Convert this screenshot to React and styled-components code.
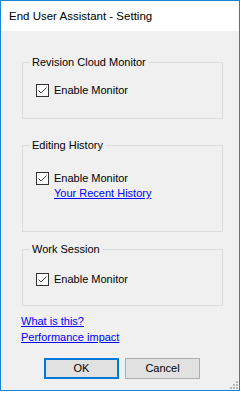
import React from "react";
import styled, { createGlobalStyle } from "styled-components";

const Global = createGlobalStyle`
  html, body { margin: 0; padding: 0; background: #ffffff; }
  * { box-sizing: border-box; }
`;

const Window = styled.div`
  width: 240px;
  height: 391px;
  border: 1px solid #1883d7;
  display: flex;
  flex-direction: column;
  font-family: "Liberation Sans", Arial, sans-serif;
  font-size: 11px;
  color: #000;
`;

const TitleBar = styled.div`
  height: 30px;
  flex: none;
  background: #ffffff;
  display: flex;
  align-items: center;
  padding-left: 8px;
  font-family: "Liberation Sans", Arial, sans-serif;
  font-size: 11.5px;
  color: #000;
`;

const Client = styled.div`
  flex: 1;
  background: #f0f0f0;
  display: flex;
  flex-direction: column;
  padding: 31px 0 0 0;
  position: relative;
`;

const GroupBox = styled.div`
  position: relative;
  margin-left: 21px;
  margin-top: ${(p) => p.$mt || 0}px;
  width: 201px;
  height: ${(p) => p.$h}px;
  border: 1px solid #dcdcdc;
  padding: ${(p) => p.$pt}px 0 0 13px;
  display: flex;
  flex-direction: column;
`;

const Legend = styled.span`
  position: absolute;
  top: -7px;
  left: 7px;
  padding: 0 2px;
  background: #f0f0f0;
  line-height: 13px;
  white-space: nowrap;
`;

const CheckRow = styled.label`
  display: flex;
  align-items: center;
  gap: 5px;
  height: 13px;
  line-height: 13px;
  white-space: nowrap;
`;

const Box = styled.span`
  width: 13px;
  height: 13px;
  flex: none;
  border: 1px solid #333333;
  background: #ffffff;
  display: flex;
  align-items: center;
  justify-content: center;
`;

const Link = styled.a`
  color: #0000ff;
  text-decoration: underline;
  line-height: 13px;
  height: 13px;
  white-space: nowrap;
  align-self: flex-start;
  margin-left: ${(p) => p.$ml || 0}px;
  margin-top: ${(p) => p.$mt || 0}px;
  cursor: pointer;
`;

const ButtonRow = styled.div`
  display: flex;
  gap: 6px;
  padding-left: 43px;
  margin-top: 14px;
`;

const Button = styled.button`
  width: 75px;
  height: 21px;
  padding: 0;
  font-family: "Liberation Sans", Arial, sans-serif;
  font-size: 11px;
  color: #000;
  background: #e1e1e1;
  border: ${(p) => (p.$default ? "2px solid #0078d7" : "1px solid #adadad")};
  line-height: 1;
`;

const Grip = styled.svg`
  position: absolute;
  right: 1px;
  bottom: 1px;
`;

function CheckBox({ label }) {
  return (
    <CheckRow>
      <Box>
        <svg width="11" height="11" viewBox="0 0 11 11">
          <polyline
            points="1.5,5.5 4,8 9.5,2.5"
            fill="none"
            stroke="#444444"
            strokeWidth="1"
          />
        </svg>
      </Box>
      {label}
    </CheckRow>
  );
}

export default function App() {
  return (
    <>
      <Global />
      <Window>
        <TitleBar>End User Assistant - Setting</TitleBar>
        <Client>
          <GroupBox $h={57} $pt={21}>
            <Legend>Revision Cloud Monitor</Legend>
            <CheckBox label="Enable Monitor" />
          </GroupBox>
          <GroupBox $h={87} $pt={26} $mt={26}>
            <Legend>Editing History</Legend>
            <CheckBox label="Enable Monitor" />
            <Link $ml={18} $mt={2}>Your Recent History</Link>
          </GroupBox>
          <GroupBox $h={57} $pt={23} $mt={17}>
            <Legend>Work Session</Legend>
            <CheckBox label="Enable Monitor" />
          </GroupBox>
          <Link $ml={20} $mt={9}>What is this?</Link>
          <Link $ml={20} $mt={3}>Performance impact</Link>
          <ButtonRow>
            <Button $default>OK</Button>
            <Button>Cancel</Button>
          </ButtonRow>
          <Grip width="8" height="8" viewBox="0 0 8 8">
            <rect x="6" y="0" width="2" height="2" fill="#b8b8b8" />
            <rect x="3" y="3" width="2" height="2" fill="#b8b8b8" />
            <rect x="6" y="3" width="2" height="2" fill="#b8b8b8" />
            <rect x="0" y="6" width="2" height="2" fill="#b8b8b8" />
            <rect x="3" y="6" width="2" height="2" fill="#b8b8b8" />
            <rect x="6" y="6" width="2" height="2" fill="#b8b8b8" />
          </Grip>
        </Client>
      </Window>
    </>
  );
}
